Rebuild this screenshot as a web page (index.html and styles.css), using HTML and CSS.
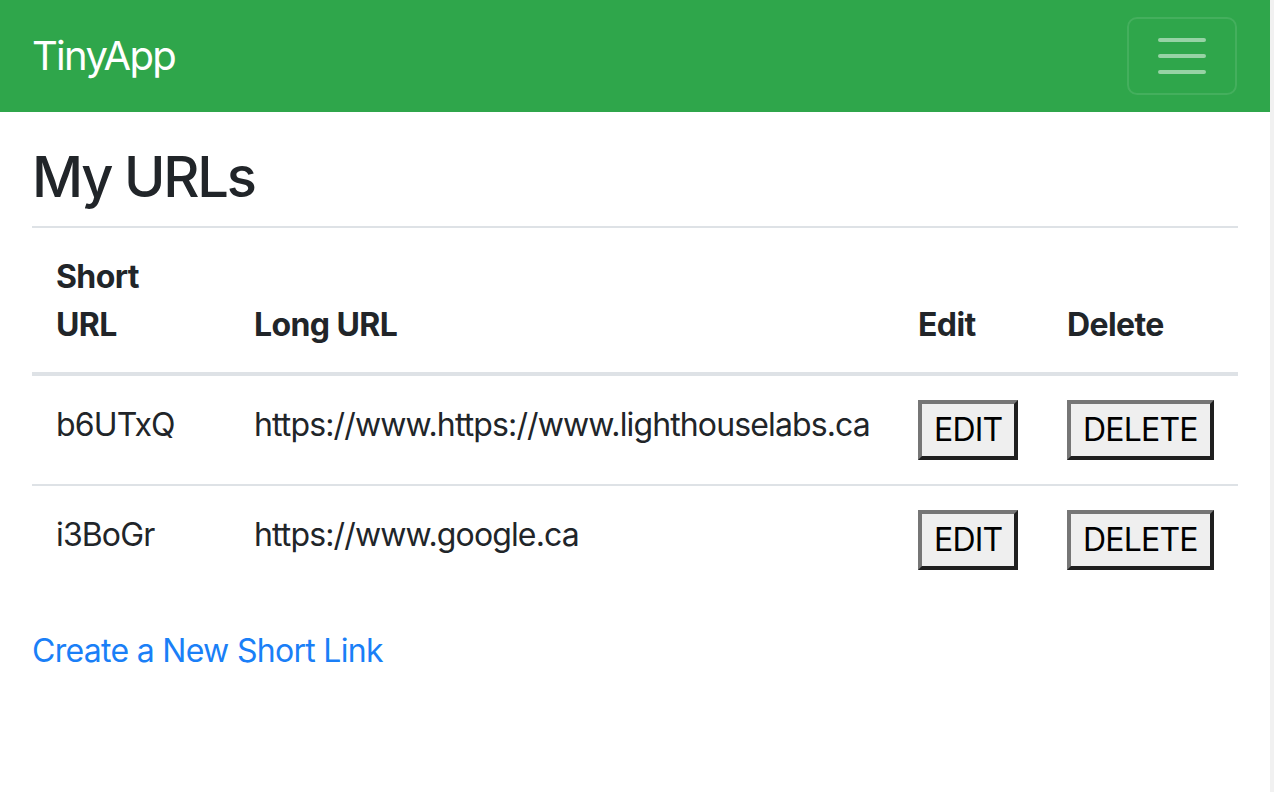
FILE: index.html
```html
<!DOCTYPE html>
<html lang="en">
<head>
<meta charset="utf-8">
<title>TinyApp</title>
<link rel="stylesheet" href="styles.css">
</head>
<body>
<div class="page">
  <nav class="navbar">
    <a class="brand" href="#">TinyApp</a>
    <button class="toggler" type="button" aria-label="Toggle navigation">
      <svg width="60" height="60" viewBox="0 0 30 30" aria-hidden="true">
        <path d="M4 7h22M4 15h22M4 23h22" stroke="rgba(255,255,255,0.5)" stroke-width="2" stroke-linecap="round" fill="none"/>
      </svg>
    </button>
  </nav>
  <main class="content">
    <h3 class="title">My URLs</h3>
    <table class="table">
      <colgroup>
        <col class="c-short">
        <col class="c-long">
        <col class="c-edit">
        <col class="c-del">
      </colgroup>
      <thead>
        <tr>
          <th>Short URL</th>
          <th>Long URL</th>
          <th>Edit</th>
          <th>Delete</th>
        </tr>
      </thead>
      <tbody>
        <tr>
          <td>b6UTxQ</td>
          <td>https://www.https://www.lighthouselabs.ca</td>
          <td class="act"><button class="btn" type="button">EDIT</button></td>
          <td class="act"><button class="btn" type="button">DELETE</button></td>
        </tr>
        <tr>
          <td>i3BoGr</td>
          <td>https://www.google.ca</td>
          <td class="act"><button class="btn" type="button">EDIT</button></td>
          <td class="act"><button class="btn" type="button">DELETE</button></td>
        </tr>
      </tbody>
    </table>
    <a class="create" href="#">Create a New Short Link</a>
  </main>
</div>
</body>
</html>
```
FILE: styles.css
```css
html {
  background: #f1f1f1;
}
body {
  margin: 0;
  font-family: Inter, "Liberation Sans", sans-serif;
  color: #212529;
  font-size: 32px;
  line-height: 48px;
}
.page {
  width: 1270px;
  min-height: 792px;
  background: #fff;
}
.navbar {
  height: 112px;
  box-sizing: border-box;
  background: #2fa64b;
  display: flex;
  align-items: center;
  justify-content: space-between;
  padding: 0 33px 0 32px;
}
.brand {
  color: #fff;
  text-decoration: none;
  font-size: 40px;
  line-height: 60px;
  letter-spacing: -1.7px;
}
.toggler {
  display: flex;
  padding: 7px 23px 7px;
  margin-top: 0;
  background: transparent;
  border: 2px solid rgba(255,255,255,0.1);
  border-radius: 10px;
}
.content {
  padding: 32px 32px 0 32px;
}
.title {
  margin: 0 0 15px 0;
  font-size: 56px;
  line-height: 67px;
  font-weight: 500;
  letter-spacing: -2.2px;
}
.table {
  width: 100%;
  border-collapse: collapse;
  table-layout: fixed;
  margin-bottom: 33px;
  letter-spacing: -0.87px;
}
.c-short { width: 198px; }
.c-long { width: 664px; }
.c-edit { width: 149px; }
.c-del { width: 195px; }
.table th,
.table td {
  padding: 25px 24px 23px;
  border-top: 2px solid #dee2e6;
  text-align: left;
  vertical-align: top;
}
.table td.act {
  padding-top: 24px;
  padding-bottom: 24px;
}
.table th {
  vertical-align: bottom;
  border-bottom: 4px solid #dee2e6;
  font-weight: 700;
  letter-spacing: -0.6px;
}
.table tbody tr:first-child td {
  border-top: 0;
}
.btn {
  display: block;
  font-family: Inter, "Liberation Sans", sans-serif;
  font-size: 32px;
  line-height: 48px;
  color: #000;
  background: #efefef;
  padding: 2px 12px;
  border-width: 4px;
  border-style: solid;
  border-color: #767676 #1f1f1f #1f1f1f #767676;
  letter-spacing: -0.8px;
  margin: 0;
}
.create {
  color: #1a7ff7;
  text-decoration: none;
  letter-spacing: -0.7px;
}
```
